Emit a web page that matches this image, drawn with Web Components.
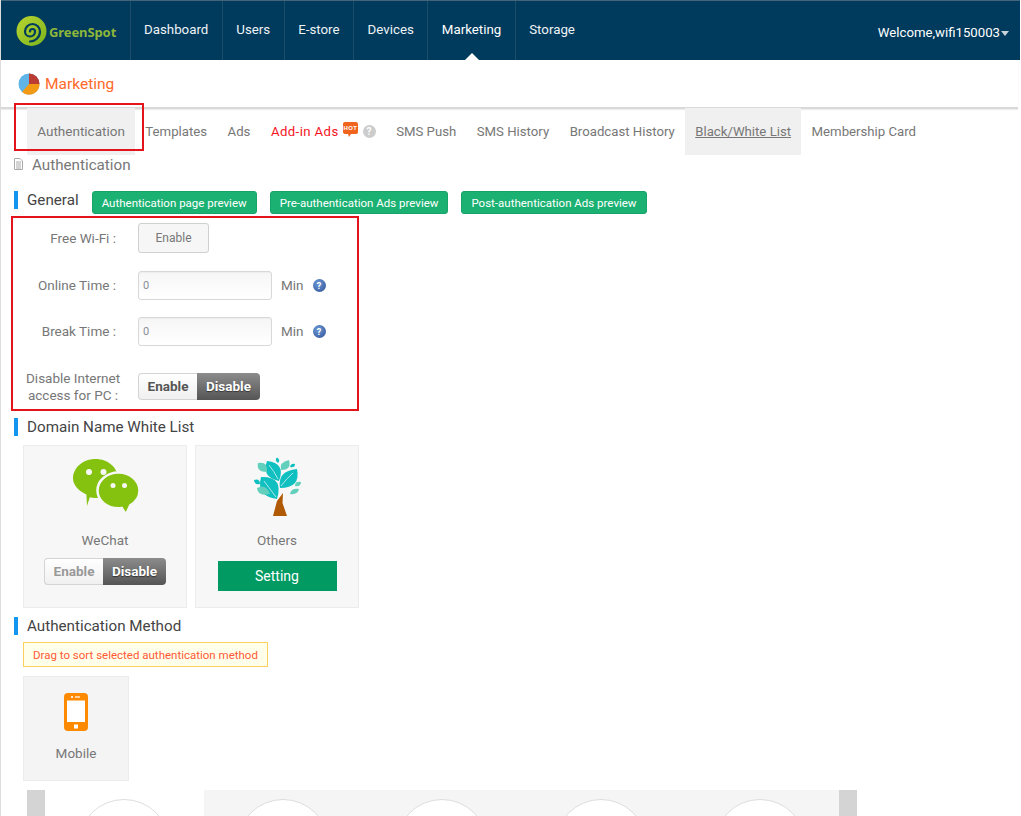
<!DOCTYPE html>
<html>
<head>
<meta charset="utf-8">
<title>GreenSpot Marketing</title>
<style>
  html, body { margin: 0; padding: 0; height: 816px; overflow: hidden; background: #fff; }
  body {
    position: relative;
    box-sizing: border-box;
    width: 1021px;
    border-left: 1px solid #dcdcdc;
    font-family: Roboto, "Noto Sans", sans-serif;
    font-size: 13px;
    color: #666;
  }
</style>
</head>
<body>

<gs-nav user="Welcome,wifi150003">
  <gs-nav-item>Dashboard</gs-nav-item>
  <gs-nav-item>Users</gs-nav-item>
  <gs-nav-item>E-store</gs-nav-item>
  <gs-nav-item>Devices</gs-nav-item>
  <gs-nav-item active>Marketing</gs-nav-item>
  <gs-nav-item>Storage</gs-nav-item>
</gs-nav>

<gs-title>Marketing</gs-title>

<gs-tabs>
  <gs-tab active style="font-size:13.500px">Authentication</gs-tab>
  <gs-tab>Templates</gs-tab>
  <gs-tab>Ads</gs-tab>
  <gs-tab hot>Add-in Ads</gs-tab>
  <gs-tab>SMS Push</gs-tab>
  <gs-tab>SMS History</gs-tab>
  <gs-tab>Broadcast History</gs-tab>
  <gs-tab active underline>Black/White List</gs-tab>
  <gs-tab>Membership Card</gs-tab>
</gs-tabs>

<gs-crumb>Authentication</gs-crumb>

<gs-head style="margin-top:16px">General
  <gs-preview slot="extra">Authentication page preview</gs-preview>
  <gs-preview slot="extra">Pre-authentication Ads preview</gs-preview>
  <gs-preview slot="extra">Post-authentication Ads preview</gs-preview>
</gs-head>

<gs-form>
  <gs-row label="Free Wi-Fi :"><gs-plain-btn>Enable</gs-plain-btn></gs-row>
  <gs-row label="Online Time :" style="margin-top:18px"><gs-time></gs-time></gs-row>
  <gs-row label="Break Time :" style="margin-top:17px"><gs-time></gs-time></gs-row>
  <gs-row wide label="Disable Internet<br>access for PC :" style="margin-top:27px"><gs-switch strong></gs-switch></gs-row>
</gs-form>

<gs-head style="margin-top:18px">Domain Name White List</gs-head>

<gs-cards>
  <gs-card name="WeChat">
    <svg slot="icon" width="80" height="60" viewBox="65 456 80 60">
      <path d="M95.500 458c12.500 0 22.500 8.700 22.500 19.500S108 497 95.500 497c-2 0-3.900-.2-5.700-.7L87 505l-.6-11.600C78.900 490 73 484.200 73 477.500 73 466.700 83 458 95.500 458z" fill="#84c20f"/>
      <path d="M118.500 471.500c11.500 0 21 8.200 21 18 0 6.300-3.700 11.600-9.300 14.900l-4.200 9.100-4.300-6.500c-1.100.2-2.200.3-3.200.3-11.500 0-21-7.900-21-17.800s9.500-18 21-18z" fill="#84c20f" stroke="#f7f7f7" stroke-width="2.500"/>
      <circle cx="89" cy="471" r="3" fill="#f7f7f7"/><circle cx="103.500" cy="471" r="3" fill="#f7f7f7"/>
      <circle cx="113" cy="484.500" r="2.500" fill="#f7f7f7"/><circle cx="124.500" cy="484.500" r="2.500" fill="#f7f7f7"/>
    </svg>
    <gs-switch muted></gs-switch>
  </gs-card>
  <gs-card name="Others">
    <svg slot="icon" width="80" height="60" viewBox="237 456 80 60">
      <path d="M273 515l4-15 6-8-.5 10 4.500 13z" fill="#b05a06"/>
      <g fill="#10bfc0">
        <path d="M277 498Q256 495 261 476Q284 475 277 498z"/>
        <path d="M280 487Q277 470 297 468Q301 487 280 487z"/>
        <path d="M279 480Q261 476 267 460Q286 462 279 480z"/>
        <path d="M278 462Q274 459 277 456.500Q281 459 278 462z"/>
        <path d="M290 466Q291 462 295 463Q295 467 290 466z"/>
        <path d="M260 483Q254 484 254 479Q260 477 260 483z"/>
      </g>
      <g fill="#62d0bc">
        <path d="M267 471Q256 471 258 462Q268 460 267 471z"/>
        <path d="M281 469Q279 461 289 459Q292 469 281 469z"/>
        <path d="M270 493Q258 496 257 487Q266 482 270 493z"/>
        <path d="M295 485Q295 480 301 481Q301 486 295 485z"/>
        <path d="M290 493Q291 487 299 488Q298 494 290 493z"/>
      </g>
      <path d="M276 496Q270 488 264 480M281 485Q286 478 293 472M278 478Q274 470 269 464" fill="none" stroke="#f7f7f7" stroke-width=".7"/>
    </svg>
    <gs-setting>Setting</gs-setting>
  </gs-card>
</gs-cards>

<gs-head style="margin-top:9px">Authentication Method</gs-head>

<gs-notice>Drag to sort selected authentication method</gs-notice>

<gs-method name="Mobile">
  <svg width="24" height="38" viewBox="0 0 24 38">
    <rect width="24" height="38" rx="4" fill="#ff8a00"/>
    <rect x="3" y="7.500" width="18" height="21.500" fill="#fff"/>
    <circle cx="8" cy="4" r="1.100" fill="#fff"/>
    <rect x="11" y="3.400" width="5" height="1.200" fill="#fff"/>
    <rect x="10" y="31.500" width="4" height="4" fill="#fff"/>
  </svg>
</gs-method>

<gs-carousel>
  <gs-slide></gs-slide>
  <gs-slide shaded></gs-slide>
  <gs-slide shaded></gs-slide>
  <gs-slide shaded></gs-slide>
  <gs-slide shaded></gs-slide>
</gs-carousel>

<gs-mark style="left:13px;top:103px;width:126px;height:44px"></gs-mark>
<gs-mark style="left:10px;top:216px;width:344px;height:191px"></gs-mark>

<script>
// small helper, every element just gets its html in an open shadow root
function define(tag, html, extra) {
  class El extends HTMLElement {
    constructor() {
      super();
      const template = document.createElement('template');
      template.innerHTML = typeof html === 'function' ? html(this) : html;
      this.attachShadow({ mode: 'open' }).appendChild(template.content.cloneNode(true));
    }
    connectedCallback() {
      if (extra) extra(this);
    }
  }
  customElements.define(tag, El);
}

define('gs-nav', `
  <style>
    :host { display: flex; height: 59px; margin-right: 1px; background: #003a5c; border-top: 1px solid #44647a; color: #fff; }
    .logo { display: flex; align-items: center; width: 129.500px; height: 59px; box-sizing: border-box; padding-left: 14px; border-right: 1px solid #1c4e6c; }
    .logo span { margin-left: 2px; margin-top: 3px; color: #8db63a; font: bold 13px "Noto Sans", sans-serif; letter-spacing: -.1px; }
    .items { display: flex; flex: 1; }
    .user { display: flex; align-items: center; height: 59px; padding-top: 3px; box-sizing: border-box; margin-right: 11px; font-size: 13.200px; }
    .caret { width: 0; height: 0; margin-left: 1px; margin-top: 3px; border: 4.500px solid transparent; border-top: 5px solid #c9d2d8; border-bottom: 0; }
  </style>
  <div class="logo">
    <svg width="32" height="32" viewBox="14 15 32 32">
      <defs><linearGradient id="lg" x1="0" y1="0" x2="1" y2="1"><stop offset="0" stop-color="#b9d532"/><stop offset="1" stop-color="#7bb41c"/></linearGradient></defs>
      <circle cx="30.500" cy="31" r="15" fill="url(#lg)"/>
      <path d="M29 31.500a2.500 2.500 0 0 1 5 0a5 5 0 0 1 -10 0a7.500 7.500 0 0 1 15 0c0 6-5 10-10 10" fill="none" stroke="#003a5c" stroke-width="2.200" stroke-linecap="round"/>
    </svg>
    <span>GreenSpot</span>
  </div>
  <div class="items"><slot></slot></div>
  <div class="user" id="user"></div>
`, el => {
  const user = el.shadowRoot.getElementById('user');
  user.innerHTML = el.getAttribute('user') + '<i class="caret"></i>';
});

define('gs-nav-item', `
  <style>
    :host { display: flex; position: relative; align-items: center; height: 57px; padding: 0 13.500px 2px; border-right: 1px solid #1c4e6c; font-size: 13.300px; color: #eef3f6; }
    :host(:last-child) { border-right: 0; }
    :host([active]) { color: #fff; }
    :host([active])::after { content: ""; position: absolute; left: 50%; bottom: 0; margin-left: -7px; border: 7px solid transparent; border-bottom: 7px solid #fff; border-top: 0; }
  </style>
  <slot></slot>
`);

define('gs-title', `
  <style>
    :host { display: flex; align-items: center; height: 49px; padding-left: 17px; padding-top: 1px; box-sizing: border-box; box-shadow: 0 1px 1px #eee; border-bottom: 2px solid #d9d9d9; font-size: 15.500px; color: #ff6a2b; margin-right: 3px; }
    svg { margin-right: 5px; }
  </style>
  <svg width="22" height="22" viewBox="0 0 22 22">
    <circle cx="11" cy="11" r="10.500" fill="#5fb4e8"/>
    <path d="M11 11V.5A10.500 10.500 0 0 1 21.500 11z" fill="#bb3c32"/>
    <path d="M11 11h10.500A10.500 10.500 0 0 1 4 19z" fill="#f39a14"/>
  </svg>
  <slot></slot>
`);

define('gs-tabs', `
  <style>
    :host { display: flex; position: relative; height: 47px; margin-top: -1px; padding-left: 26px; }
  </style>
  <slot></slot>
`);

define('gs-tab', el => `
  <style>
    :host { display: flex; align-items: center; height: 46px; padding: 0 10.250px 1px; color: #777; font-size: 13.200px; white-space: nowrap; }
    :host([active]) { background: #f0f0f0; }
    :host([underline]) { text-decoration: underline; }
    :host([hot]) { color: #f5141e; letter-spacing: .4px; }
    svg { display: block; }
    .hot { margin-left: 4px; margin-top: -3px; }
    .q { display: flex; align-items: center; justify-content: center; width: 13px; height: 13px; margin-left: 5px; border-radius: 50%; background: #ccc; color: #fff; font-size: 10px; font-weight: bold; }
  </style>
  <slot></slot>
  ${el.hasAttribute('hot') ? `
  <svg class="hot" width="15" height="16" viewBox="0 0 15 16">
    <path d="M2 0h11a2 2 0 0 1 2 2v8a2 2 0 0 1-2 2H8l-2 3-1-3H2a2 2 0 0 1-2-2V2a2 2 0 0 1 2-2z" fill="#f0641e"/>
    <text x="7.500" y="7.800" text-anchor="middle" font-family="Liberation Sans" font-size="6" font-weight="bold" fill="#fff">HOT</text>
  </svg>
  <span class="q">?</span>` : ''}
`);

define('gs-crumb', `
  <style>
    :host { display: flex; align-items: center; height: 19px; padding: 0 0 1px 13px; font-size: 15.200px; color: #777; }
    svg { margin-right: 9px; margin-top: -2px; }
  </style>
  <svg width="9" height="12" viewBox="0 0 9 12">
    <path d="M.5.5h5.500l2.500 2.500v8.500h-8z" fill="#fff" stroke="#aaa"/>
    <path d="M2 4h5M2 6h5M2 8h5M2 10h5" stroke="#aaa"/>
  </svg>
  <slot></slot>
`);

define('gs-head', `
  <style>
    :host { display: flex; align-items: flex-start; height: 23px; font-size: 15.200px; color: #444; }
    .bar { width: 4px; height: 18px; margin-left: 13px; background: #1296f0; }
    .label { margin-left: 9px; line-height: 19px; white-space: nowrap; }
    ::slotted([slot=extra]) { margin-right: 13px; }
    .extra { display: flex; margin-left: 13px; }
  </style>
  <span class="bar"></span>
  <span class="label"><slot></slot></span>
  <span class="extra"><slot name="extra"></slot></span>
`);

define('gs-preview', `
  <style>
    :host { display: flex; align-items: center; justify-content: center; height: 23px; padding: 0 9px; box-sizing: border-box; border: 1px solid #17a468; border-radius: 3px; background: #1bb172; color: #fff; font-size: 11.500px; white-space: nowrap; }
  </style>
  <slot></slot>
`);

define('gs-form', `
  <style>
    :host { display: block; margin-top: 9px; }
  </style>
  <slot></slot>
`);

define('gs-row', el => `
  <style>
    :host { display: flex; align-items: center; }
    .label { width: 115px; margin-right: 22px; padding-bottom: 1px; text-align: right; font-size: 13.500px; color: #777; white-space: nowrap; flex: none; }
    :host([wide]) .label { box-sizing: border-box; width: 119px; margin: -3px 18px -4px 0; padding: 0 0 0 25px; text-align: center; line-height: 17px; }
  </style>
  <div class="label">${el.getAttribute('label')}</div>
  <slot></slot>
`);

define('gs-plain-btn', `
  <style>
    :host { display: flex; align-items: center; justify-content: center; width: 71px; height: 30px; box-sizing: border-box; border: 1px solid #d0d0d0; border-radius: 3px; background: #f6f6f6; font-size: 12px; color: #777; }
  </style>
  <slot></slot>
`);

define('gs-time', `
  <style>
    :host { display: flex; align-items: center; }
    .box { display: flex; align-items: center; width: 134px; height: 29px; box-sizing: border-box; padding-left: 4px; border: 1px solid #d8d8d8; border-radius: 3px; background: linear-gradient(#f6f6f6, #fff); font-size: 11px; color: #8a8f98; box-shadow: inset 0 1px 1px #eee; }
    .unit { margin-left: 9px; padding-bottom: 1px; font-size: 13.500px; color: #777; }
    .help { display: flex; align-items: center; justify-content: center; width: 13px; height: 13px; margin-left: 9px; border-radius: 50%; background: radial-gradient(circle at 40% 35%, #6f9ad6, #2c4f94); color: #fff; font-size: 9px; font-weight: bold; }
  </style>
  <div class="box">0</div>
  <span class="unit">Min</span>
  <span class="help">?</span>
`);

define('gs-switch', `
  <style>
    :host { display: flex; width: 122px; height: 27px; box-sizing: border-box; font-size: 13.500px; font-weight: bold; }
    .on { display: flex; align-items: center; justify-content: center; width: 59px; box-sizing: border-box; padding-bottom: 2px; border: 1px solid #d4d4d4; border-right: 0; border-radius: 4px 0 0 4px; background: linear-gradient(#fff, #f0f0f0); color: #555; }
    :host([muted]) .on { color: #999; }
    .off { display: flex; align-items: center; justify-content: center; width: 63px; padding-bottom: 2px; box-sizing: border-box; border-radius: 0 4px 4px 0; background: linear-gradient(#8c8c8c, #555); color: #fff; text-shadow: 0 1px 1px #333; }
  </style>
  <span class="on">Enable</span><span class="off">Disable</span>
`);

define('gs-cards', `
  <style>
    :host { display: flex; gap: 8px; margin-top: 4px; padding-left: 22px; }
  </style>
  <slot></slot>
`);

define('gs-card', el => `
  <style>
    :host { display: flex; flex-direction: column; align-items: center; width: 164px; height: 163px; box-sizing: border-box; padding-top: 11px; border: 1px solid #ececec; background: #f7f7f7; }
    .name { margin-top: 13px; margin-bottom: 8px; line-height: 20px; font-size: 13.500px; color: #777; }
    .icon { height: 60px; }
  </style>
  <div class="icon"><slot name="icon"></slot></div>
  <div class="name">${el.getAttribute('name')}</div>
  <slot></slot>
`);

define('gs-setting', `
  <style>
    :host { display: flex; align-items: center; justify-content: center; width: 119px; height: 30px; margin-top: 3px; background: #009a62; color: #fff; font-size: 14px; }
  </style>
  <slot></slot>
`);

define('gs-notice', `
  <style>
    :host { display: flex; align-items: center; width: 245px; height: 25px; box-sizing: border-box; margin: 2px 0 0 22px; padding-left: 9px; border: 1px solid #fcd05c; background: #ffffea; color: #ff5a36; font-size: 11.500px; white-space: nowrap; }
  </style>
  <slot></slot>
`);

define('gs-method', el => `
  <style>
    :host { display: flex; flex-direction: column; align-items: center; width: 106px; height: 105px; box-sizing: border-box; margin: 9px 0 0 22px; padding-top: 16px; border: 1px solid #ececec; background: #f4f4f4; }
    .name { margin-top: 12px; line-height: 20px; font-size: 13.500px; color: #777; }
    svg, ::slotted(svg) { display: block; }
  </style>
  <slot></slot>
  <div class="name">${el.getAttribute('name')}</div>
`);

define('gs-carousel', `
  <style>
    :host { display: flex; height: 120px; margin: 9px 0 0 26px; }
    .arrow { width: 18px; background: #d4d4d4; flex: none; }
  </style>
  <div class="arrow"></div>
  <slot></slot>
  <div class="arrow"></div>
`);

define('gs-slide', `
  <style>
    :host { display: flex; justify-content: center; width: 158.800px; padding-top: 9px; box-sizing: border-box; flex: none; }
    :host([shaded]) { background: #f5f5f5; }
    .ring { width: 92px; height: 92px; box-sizing: border-box; border: 1px solid #ddd; border-radius: 50%; background: #fff; }
  </style>
  <div class="ring"></div>
`);

// red annotation boxes lie over the page
define('gs-mark', `
  <style>
    :host { display: block; position: absolute; border: 2px solid #e3141c; }
  </style>
`);
</script>
</body>
</html>
